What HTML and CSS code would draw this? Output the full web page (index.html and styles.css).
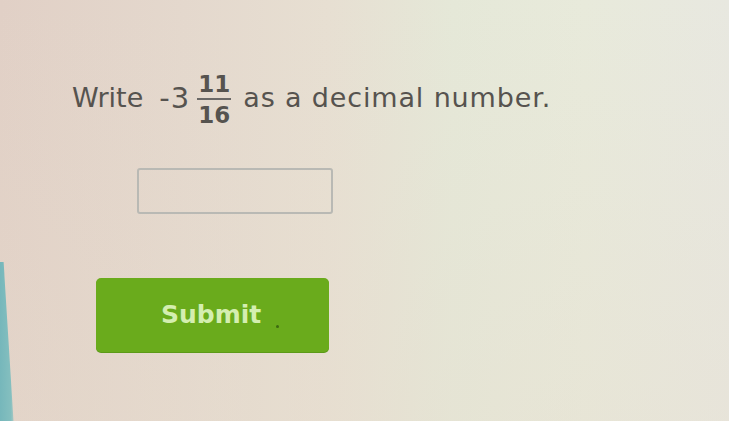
FILE: index.html
```html
<!DOCTYPE html>
<html>
<head>
<meta charset="utf-8">
<link rel="stylesheet" href="styles.css">
</head>
<body>
<div class="screen">
  <div class="edge"></div>
  <main class="content">
    <p class="question">
      <span class="word">Write</span>
      <span class="mixed">
        <span class="whole">-3</span>
        <span class="frac">
          <span class="num">11</span>
          <span class="den">16</span>
        </span>
      </span>
      <span class="word wide">as a decimal number.</span>
    </p>
    <div class="answer"><input class="box" type="text" aria-label="answer"></div>
    <button class="submit" type="button">Submit</button>
  </main>
</div>
</body>
</html>
```
FILE: styles.css
```css
html, body {
  margin: 0;
  padding: 0;
}
body {
  width: 729px;
  height: 421px;
  overflow: hidden;
  font-family: "DejaVu Sans", Verdana, sans-serif;
}
.screen {
  position: relative;
  width: 729px;
  height: 421px;
  background:
    linear-gradient(180deg, rgba(255,255,255,0) 0%, rgba(230,220,205,0.35) 100%),
    linear-gradient(90deg, #e1d0c6 0%, #e4d8cd 25%, #e7dfd2 45%, #e5e8d8 62%, #e8eadb 80%, #e8e8e0 100%);
}
.edge {
  position: absolute;
  left: 0;
  top: 262px;
  width: 18px;
  height: 159px;
  background: linear-gradient(90deg, #76b7bb 0%, #84bfbf 60%, rgba(200,215,200,0) 100%);
  clip-path: polygon(0 0, 20% 0, 75% 100%, 0 100%);
}
.content {
  padding: 68px 0 0 72px;
  display: flex;
  flex-direction: column;
  align-items: flex-start;
}
.question {
  margin: 0;
  display: flex;
  align-items: center;
  color: #56534f;
  font-size: 27px;
}
.wide {
  letter-spacing: 0.85px;
  margin-left: 12px;
}
.mixed {
  display: inline-flex;
  align-items: center;
  gap: 7px;
  margin-left: 16px;
}
.whole {
  font-size: 29px;
  letter-spacing: 1px;
}
.frac {
  display: inline-flex;
  flex-direction: column;
  align-items: center;
  font-size: 23px;
  font-weight: bold;
  line-height: 24px;
  margin-top: 4px;
}
.num {
  padding: 0 1px 2px;
  border-bottom: 2px solid #6a6866;
}
.den {
  padding-top: 3px;
}
.answer {
  margin: 41px 0 0 65px;
}
.box {
  display: block;
  width: 196px;
  height: 46px;
  box-sizing: border-box;
  border: 2px solid #b9b9b4;
  border-radius: 3px;
  background: transparent;
  outline: none;
}
.submit {
  position: relative;
  margin: 64px 0 0 24px;
  width: 233px;
  height: 74px;
  border: none;
  border-radius: 5px;
  background: #6aab1c;
  color: #d4eeb0;
  font-family: "DejaVu Sans", Verdana, sans-serif;
  font-size: 25px;
  font-weight: bold;
  padding: 0 0 2px 0;
  text-align: left;
  text-indent: 65px;
  box-shadow: 0 1px 0 #5c9a18;
}
.submit::after {
  content: "";
  position: absolute;
  left: 180px;
  top: 47px;
  width: 3px;
  height: 3px;
  border-radius: 50%;
  background: #3d6a10;
}
```
